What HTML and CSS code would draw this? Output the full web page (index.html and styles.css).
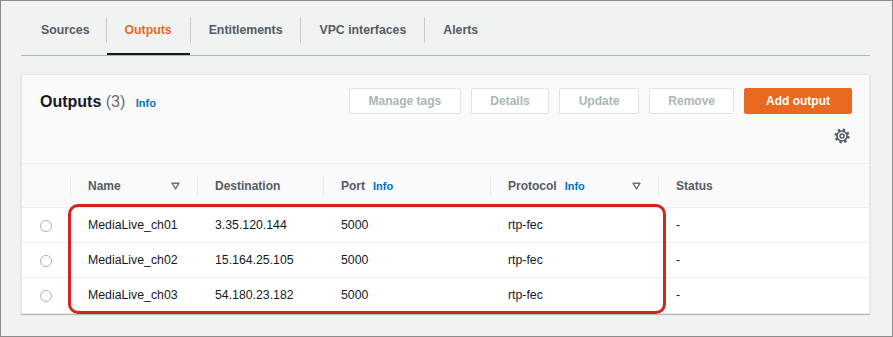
FILE: index.html
```html
<!DOCTYPE html>
<html lang="en">
<head>
    <meta charset="UTF-8">
    <meta name="viewport" content="width=device-width, initial-scale=1.0">
    <title>Flow outputs</title>
    <link rel="stylesheet" href="styles.css">
</head>
<body>
    <div class="frame">
        <div class="tabs">
            <div class="tab">Sources</div>
            <span class="tab-divider"></span>
            <div class="tab active">Outputs</div>
            <span class="tab-divider"></span>
            <div class="tab">Entitlements</div>
            <span class="tab-divider"></span>
            <div class="tab">VPC interfaces</div>
            <span class="tab-divider"></span>
            <div class="tab">Alerts</div>
        </div>

        <div class="panel">
            <div class="panel-header">
                <div class="header-row">
                    <h2 class="title">Outputs <span class="count">(3)</span> <a class="info">Info</a></h2>
                    <div class="actions">
                        <button class="btn">Manage tags</button>
                        <button class="btn narrow">Details</button>
                        <button class="btn">Update</button>
                        <button class="btn narrow">Remove</button>
                        <button class="btn primary">Add output</button>
                    </div>
                </div>
                <div class="settings-row">
                    <svg class="gear" width="16" height="16" viewBox="0 0 16 16">
                        <circle cx="8" cy="8" r="6.4" fill="none" stroke="#545b64" stroke-width="2.2" stroke-dasharray="2.4 2.63"/>
                        <circle cx="8" cy="8" r="5" fill="none" stroke="#545b64" stroke-width="1.6"/>
                        <circle cx="8" cy="8" r="2" fill="none" stroke="#545b64" stroke-width="1.5"/>
                    </svg>
                </div>
            </div>

            <table class="outputs">
                <colgroup>
                    <col class="c-select">
                    <col class="c-name">
                    <col class="c-dest">
                    <col class="c-port">
                    <col class="c-proto">
                    <col>
                </colgroup>
                <thead>
                    <tr>
                        <th></th>
                        <th><div class="th-in">Name <svg class="sort" width="9" height="8" viewBox="0 0 9 8"><path d="M1 1.2h7L4.5 7z" fill="none" stroke="#687078" stroke-width="1.4" stroke-linejoin="round"/></svg></div></th>
                        <th><div class="th-in">Destination</div></th>
                        <th><div class="th-in">Port <a class="info">Info</a></div></th>
                        <th><div class="th-in">Protocol <a class="info">Info</a> <svg class="sort" width="9" height="8" viewBox="0 0 9 8"><path d="M1 1.2h7L4.5 7z" fill="none" stroke="#687078" stroke-width="1.4" stroke-linejoin="round"/></svg></div></th>
                        <th><div class="th-in">Status</div></th>
                    </tr>
                </thead>
                <tbody>
                    <tr>
                        <td class="select"><span class="radio"></span></td>
                        <td>MediaLive_ch01</td>
                        <td>3.35.120.144</td>
                        <td>5000</td>
                        <td>rtp-fec</td>
                        <td>-</td>
                    </tr>
                    <tr>
                        <td class="select"><span class="radio"></span></td>
                        <td>MediaLive_ch02</td>
                        <td>15.164.25.105</td>
                        <td>5000</td>
                        <td>rtp-fec</td>
                        <td>-</td>
                    </tr>
                    <tr>
                        <td class="select"><span class="radio"></span></td>
                        <td>MediaLive_ch03</td>
                        <td>54.180.23.182</td>
                        <td>5000</td>
                        <td>rtp-fec</td>
                        <td>-</td>
                    </tr>
                </tbody>
            </table>

            <div class="highlight"></div>
        </div>
    </div>
</body>
</html>
```

FILE: styles.css
```css
* {
    box-sizing: border-box;
}
body {
    margin: 0;
    font-family: "Liberation Sans", Arial, sans-serif;
    color: #16191f;
    background-color: #f2f3f3;
}
.frame {
    width: 893px;
    height: 337px;
    border: 1px solid #8c8c8c;
    background-color: #f1f2f2;
    padding: 0 22px 0 20px;
}
.tabs {
    display: flex;
    align-items: center;
    height: 55px;
    border-bottom: 1px solid #aab7b8;
}
.tab {
    height: 54px;
    display: flex;
    align-items: center;
    padding: 5px 18px 0 18px;
    font-size: 12.3px;
    font-weight: bold;
    color: #545b64;
    border-bottom: 2px solid transparent;
}
.tab:first-child {
    padding-left: 20px;
    padding-right: 16px;
}
.tab.active {
    color: #e8691f;
    border-bottom-color: #16191f;
}
.tab-divider {
    width: 1px;
    height: 26px;
    margin-top: 4px;
    background-color: #c4cccc;
}
.panel {
    position: relative;
    margin-top: 18px;
    background-color: #fafafa;
    border: 1px solid #e4e8e8;
    box-shadow: 0 1px 1px rgba(0, 28, 36, 0.25);
}
.panel-header {
    padding: 13px 17px 0 18px;
    height: 88px;
}
.header-row {
    display: flex;
    justify-content: space-between;
    align-items: center;
}
.title {
    margin: 0;
    padding-top: 2px;
    font-size: 16px;
    font-weight: bold;
    color: #16191f;
}
.count {
    font-weight: normal;
    color: #687078;
}
.info {
    font-size: 11px;
    font-weight: bold;
    color: #0073bb;
    margin-left: 5px;
}
.title .info {
    margin-left: 6px;
}
.actions {
    display: flex;
    gap: 10px;
}
.btn {
    height: 26px;
    padding: 0 19px;
    font-family: inherit;
    font-size: 12px;
    font-weight: bold;
    color: #aab7b8;
    background-color: #fff;
    border: 1px solid #dfe4e4;
    border-radius: 2px;
}
.btn.narrow {
    padding: 0 18px;
}
.btn.primary {
    padding: 0 21px;
    color: #fff;
    background-color: #e8691f;
    border-color: #e8691f;
}
.settings-row {
    display: flex;
    justify-content: flex-end;
    margin-top: 14px;
    padding-right: 2px;
}
.outputs {
    width: 100%;
    border-collapse: collapse;
    table-layout: fixed;
    font-size: 12.3px;
}
.c-select { width: 48px; }
.c-name { width: 127px; }
.c-dest { width: 126px; }
.c-port { width: 167px; }
.c-proto { width: 168px; }
.outputs thead tr {
    border-top: 1px solid #eaeded;
    background-color: #fafafa;
}
.outputs th {
    height: 44px;
    padding: 0;
    text-align: left;
    font-size: 12px;
    font-weight: bold;
    color: #545b64;
}
.th-in {
    display: flex;
    align-items: center;
    height: 21px;
    padding: 0 17px 0 17px;
    border-left: 1px solid #eaeded;
}
.th-in .sort {
    margin-left: auto;
}
.th-in .info {
    margin-left: 8px;
}
.outputs tbody tr {
    height: 35px;
    background-color: #fff;
    border-top: 1px solid #eaeded;
}
.outputs td {
    padding: 0 0 0 18px;
    color: #16191f;
}
.outputs td.select {
    padding: 0;
    text-align: center;
}
.radio {
    display: inline-block;
    width: 12px;
    height: 12px;
    border: 1px solid #aab7b8;
    border-radius: 50%;
    background-color: #fff;
    vertical-align: middle;
}
/* annotation drawn over the rows */
.highlight {
    position: absolute;
    left: 46px;
    top: 129px;
    width: 598px;
    height: 110px;
    border: 3px solid #d7231c;
    border-radius: 10px;
}
```
